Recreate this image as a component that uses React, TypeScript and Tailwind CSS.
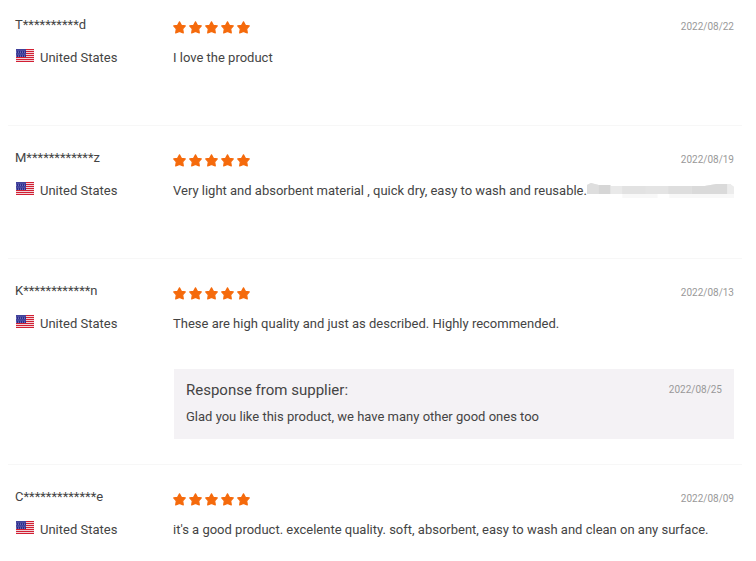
import type { ReactNode } from "react";

type Review = {
  name: string;
  country: string;
  date: string;
  text: string;
  redacted?: boolean;
  response?: { text: string; date: string };
};

const reviews: Review[] = [
  {
    name: "T**********d",
    country: "United States",
    date: "2022/08/22",
    text: "I love the product",
  },
  {
    name: "M************z",
    country: "United States",
    date: "2022/08/19",
    text: "Very light and absorbent material , quick dry, easy to wash and reusable.",
    redacted: true,
  },
  {
    name: "K************n",
    country: "United States",
    date: "2022/08/13",
    text: "These are high quality and just as described. Highly recommended.",
    response: {
      text: "Glad you like this product, we have many other good ones too",
      date: "2022/08/25",
    },
  },
  {
    name: "C*************e",
    country: "United States",
    date: "2022/08/09",
    text: "it's a good product. excelente quality. soft, absorbent, easy to wash and clean on any surface.",
  },
];

const Flag = () => (
  <svg viewBox="0 0 19 13" className="my-px h-[13px] w-[19px] shrink-0" aria-hidden="true">
    <rect x="1" width="18" height="13" fill="#f0d3d8" />
    {[0, 2, 4, 6, 8, 10, 12].map((y) => (
      <rect key={y} x="1" y={y} width="18" height="1" fill="#d21f33" />
    ))}
    <rect x="1" width="10" height="8" fill="#2b2b8c" />
    {[1, 3, 5, 7].map((y) =>
      [2, 4, 6, 8, 10].map((x) => (
        <circle key={`${x}-${y}`} cx={y % 4 === 1 ? x : x - 0.5} cy={y} r="0.5" fill="#b9bce8" />
      ))
    )}
  </svg>
);

const Stars = () => (
  <div className="flex gap-[3px]" role="img" aria-label="5 out of 5 stars">
    {[1, 2, 3, 4, 5].map((n) => (
      <svg key={n} viewBox="0 0 13 13" className="h-[13px] w-[13px]" aria-hidden="true">
        <path
          d="M6.5 0.8 L8.4 4.3 L12.3 4.9 L9.7 7.8 L10.3 12 L6.5 10.4 L2.7 12 L3.3 7.8 L0.7 4.9 L4.6 4.3 Z"
          fill="#f56a0c"
          stroke="#f56a0c"
          strokeWidth="1.2"
          strokeLinejoin="round"
        />
      </svg>
    ))}
  </div>
);

const RedactedText = () => (
  <svg
    viewBox="0 0 150 16"
    preserveAspectRatio="none"
    className="h-4 min-w-0 flex-1"
    aria-hidden="true"
  >
    <path d="M0 2 L4 0 L12 2 L24 3 L120 3 L132 1 L146 1 L150 4 L150 11 L0 11 Z" fill="#e6e6e6" />
    <path d="M0 2 L4 0 L12 2 L12 11 L0 11 Z" fill="#dedede" />
    <rect x="12" y="2" width="12" height="9" fill="#d6d6d6" />
    <rect x="24" y="3" width="12" height="8" fill="#e9e9e9" />
    <rect x="36" y="3" width="24" height="8" fill="#e2e2e2" />
    <rect x="60" y="3" width="23" height="8" fill="#e4e4e4" />
    <rect x="83" y="3" width="24" height="8" fill="#dedede" />
    <path d="M107 3 L120 3 L132 1 L143 1 L143 11 L107 11 Z" fill="#dadada" />
    <path d="M143 1 L146 1 L150 4 L150 11 L143 11 Z" fill="#ececec" />
    <rect x="36" y="11" width="36" height="4" fill="#f8f8f8" />
    <rect x="84" y="11" width="66" height="4" fill="#f8f8f8" />
  </svg>
);

const DateLabel = ({ children }: { children: ReactNode }) => (
  <time className="shrink-0 text-[10px] leading-5 text-[#999]">{children}</time>
);

const ReviewItem = ({ review }: { review: Review }) => (
  <li className="flex border-b border-[#f7f7f7] pt-[22px] pr-2 pb-[57px] pl-[7px] first:pt-[15px] last:border-b-0 last:pb-5">
    <div className="w-[158px] shrink-0">
      <p>{review.name}</p>
      <div className="mt-[13px] flex items-start gap-[6px]">
        <Flag />
        <span>{review.country}</span>
      </div>
    </div>
    <div className="min-w-0 flex-1">
      <div className="flex items-center justify-between pt-[2px]">
        <Stars />
        <DateLabel>{review.date}</DateLabel>
      </div>
      <div className="mt-[11px] flex items-center">
        <p>{review.text}</p>
        {review.redacted && <RedactedText />}
      </div>
      {review.response && (
        <div className="mt-[35px] -mb-8 ml-px bg-[#f4f2f5] px-3 pt-[11px] pb-3">
          <div className="flex items-center justify-between">
            <h3 className="text-[15px]">Response from supplier:</h3>
            <DateLabel>{review.response.date}</DateLabel>
          </div>
          <p className="mt-[7px]">{review.response.text}</p>
        </div>
      )}
    </div>
  </li>
);

const App = () => {
  return (
    <main className="min-h-screen bg-white pr-[14px] pl-2 font-[Roboto,'Liberation_Sans',sans-serif] text-[13px] leading-5 text-[#444]">
      <ul>
        {reviews.map((review) => (
          <ReviewItem key={review.name} review={review} />
        ))}
      </ul>
    </main>
  );
};

export default App;
